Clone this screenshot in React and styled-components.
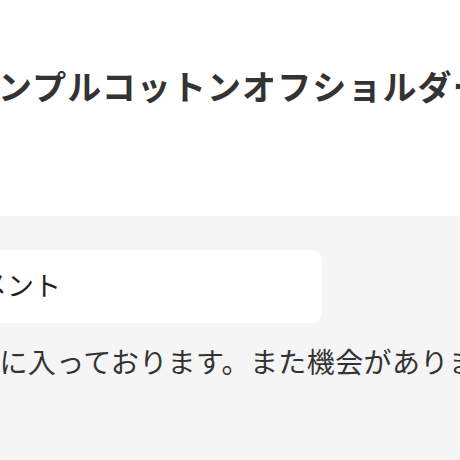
import React from "react";
import styled, { createGlobalStyle } from "styled-components";

const GlobalStyle = createGlobalStyle`
  html, body {
    margin: 0;
    padding: 0;
    background: #ffffff;
    overflow: hidden;
  }
  body {
    font-family: "Noto Sans CJK JP", "Noto Sans", sans-serif;
    color: #333333;
  }
`;

const Page = styled.div`
  width: 460px;
  height: 460px;
  display: flex;
  flex-direction: column;
  overflow: hidden;
`;

const Header = styled.header`
  height: 216px;
  box-sizing: border-box;
  padding-top: 69px;
  margin-left: -37px;
  background: #ffffff;
`;

const Title = styled.h1`
  margin: 0;
  font-size: 34px;
  line-height: 34px;
  font-weight: 700;
  letter-spacing: 1.1px;
  color: #333333;
  white-space: nowrap;
`;

const ReviewSection = styled.section`
  flex: 1;
  background: #f5f5f5;
  padding-top: 34px;
  margin-left: -70px;
`;

const Card = styled.div`
  width: 392px;
  height: 73px;
  box-sizing: border-box;
  background: #ffffff;
  border-radius: 10px;
  padding: 0 0 5px 23px;
  display: flex;
  align-items: center;
`;

const CardLabel = styled.span`
  font-size: 27px;
  line-height: 27px;
  color: #222222;
  white-space: nowrap;
`;

const Comment = styled.p`
  margin: 24px 0 0 41px;
  font-size: 28px;
  line-height: 28px;
  letter-spacing: 0.4px;
  color: #333333;
  white-space: nowrap;
`;

export default function App() {
  return (
    <>
      <GlobalStyle />
      <Page>
        <Header>
          <Title>シンプルコットンオフショルダーワンピース</Title>
        </Header>
        <ReviewSection>
          <Card>
            <CardLabel>コメント</CardLabel>
          </Card>
          <Comment>気に入っております。また機会がありましたらよろしくお願いします。</Comment>
        </ReviewSection>
      </Page>
    </>
  );
}
